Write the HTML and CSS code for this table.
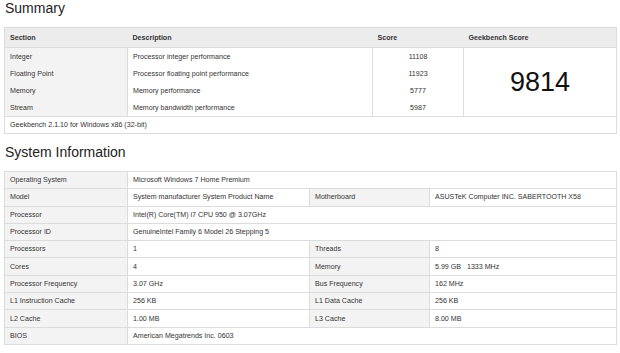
FILE: index.html
```html
<!DOCTYPE html>
<html lang="en">
<head>
  <meta charset="UTF-8" />
  <title>Geekbench Results</title>
  <link rel="stylesheet" href="styles.css">
</head>
<body>

  <!-- Summary -->
  <h2 class="section-title">Summary</h2>
  <table class="result-table summary-table">
    <colgroup>
      <col class="col-label">
      <col class="col-desc">
      <col class="col-score">
      <col class="col-total">
    </colgroup>
    <thead>
      <tr>
        <th>Section</th>
        <th>Description</th>
        <th>Score</th>
        <th>Geekbench Score</th>
      </tr>
    </thead>
    <tbody>
      <tr>
        <td class="label">Integer</td>
        <td>Processor integer performance</td>
        <td class="score">11108</td>
        <td class="total" rowspan="4">9814</td>
      </tr>
      <tr>
        <td class="label">Floating Point</td>
        <td>Processor floating point performance</td>
        <td class="score">11923</td>
      </tr>
      <tr>
        <td class="label">Memory</td>
        <td>Memory performance</td>
        <td class="score">5777</td>
      </tr>
      <tr>
        <td class="label">Stream</td>
        <td>Memory bandwidth performance</td>
        <td class="score">5987</td>
      </tr>
    </tbody>
    <tfoot>
      <tr>
        <td colspan="4">Geekbench 2.1.10 for Windows x86 (32-bit)</td>
      </tr>
    </tfoot>
  </table>

  <!-- System Information -->
  <h2 class="section-title">System Information</h2>
  <table class="result-table system-table">
    <colgroup>
      <col class="col-label">
      <col class="col-value">
      <col class="col-label2">
      <col class="col-value2">
    </colgroup>
    <tbody>
      <tr>
        <td class="label">Operating System</td>
        <td colspan="3">Microsoft Windows 7 Home Premium</td>
      </tr>
      <tr>
        <td class="label">Model</td>
        <td>System manufacturer System Product Name</td>
        <td class="label">Motherboard</td>
        <td>ASUSTeK Computer INC. SABERTOOTH X58</td>
      </tr>
      <tr>
        <td class="label">Processor</td>
        <td colspan="3">Intel(R) Core(TM) i7 CPU 950 @ 3.07GHz</td>
      </tr>
      <tr>
        <td class="label">Processor ID</td>
        <td colspan="3">GenuineIntel Family 6 Model 26 Stepping 5</td>
      </tr>
      <tr>
        <td class="label">Processors</td>
        <td>1</td>
        <td class="label">Threads</td>
        <td>8</td>
      </tr>
      <tr>
        <td class="label">Cores</td>
        <td>4</td>
        <td class="label">Memory</td>
        <td>5.99 GB &nbsp; 1333 MHz</td>
      </tr>
      <tr>
        <td class="label">Processor Frequency</td>
        <td>3.07 GHz</td>
        <td class="label">Bus Frequency</td>
        <td>162 MHz</td>
      </tr>
      <tr>
        <td class="label">L1 Instruction Cache</td>
        <td>256 KB</td>
        <td class="label">L1 Data Cache</td>
        <td>256 KB</td>
      </tr>
      <tr>
        <td class="label">L2 Cache</td>
        <td>1.00 MB</td>
        <td class="label">L3 Cache</td>
        <td>8.00 MB</td>
      </tr>
      <tr>
        <td class="label">BIOS</td>
        <td colspan="3">American Megatrends Inc. 0603</td>
      </tr>
    </tbody>
  </table>

</body>
</html>
```

FILE: styles.css
```css
body {
  margin: 0;
  padding: 0 4px;
  font-family: 'Liberation Sans', Arial, sans-serif;
  color: #333;
  background: #fff;
}

.section-title {
  margin: 0 0 11px 1px;
  font-size: 14px;
  line-height: 16px;
  font-weight: normal;
  color: #222;
}

.result-table {
  width: 612px;
  table-layout: fixed;
  border-collapse: collapse;
  border: 1px solid #dcdcdc;
  font-size: 7.1px;
  margin-bottom: 10px;
}

.result-table td,
.result-table th {
  padding: 0 5px;
  text-align: left;
  white-space: nowrap;
  overflow: hidden;
}

.col-label { width: 123px; }
.col-desc { width: 245px; }
.col-score { width: 91px; }
.col-total { width: 153px; }

.col-value { width: 182px; }
.col-label2 { width: 120px; }
.col-value2 { width: 187px; }

/* summary */
.summary-table th {
  height: 19px;
  background: #ececec;
  font-weight: bold;
  color: #333;
  border-bottom: 1px solid #dcdcdc;
}

.summary-table tbody td {
  height: 17px;
  border-left: 1px solid #dcdcdc;
}

.summary-table .label {
  background: #f3f3f3;
  border-left: none;
}

.summary-table .score {
  text-align: center;
}

.summary-table .total {
  text-align: center;
  font-size: 27px;
  color: #111;
}

.summary-table tfoot td {
  height: 16px;
  border-top: 1px solid #dcdcdc;
}

/* system information */
.system-table td {
  height: 16.3px;
  border: 1px solid #dcdcdc;
}

.system-table .label {
  background: #f3f3f3;
}
```
